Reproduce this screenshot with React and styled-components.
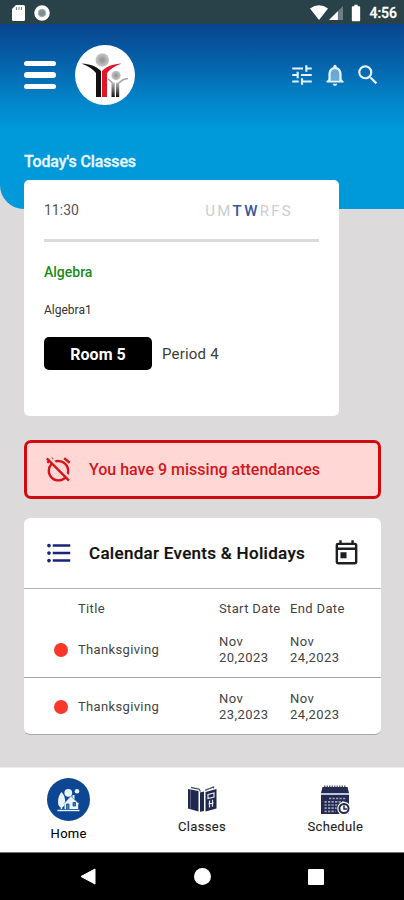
import React from "react";
import styled, { createGlobalStyle } from "styled-components";
import {
  MdBatteryFull,
  MdFormatListBulleted,
  MdOutlineAlarmOff,
  MdOutlineToday,
  MdSearch,
  MdTune
} from "react-icons/md";

const GlobalStyle = createGlobalStyle`
  * {
    box-sizing: border-box;
  }

  body {
    margin: 0;
    font-family: Roboto, "Liberation Sans", sans-serif;
    background: #dcdadb;
  }
`;

const Screen = styled.div`
  width: 404px;
  height: 900px;
  display: flex;
  flex-direction: column;
  overflow: hidden;
  background: #dcdadb;
`;

const StatusBar = styled.div`
  height: 24px;
  flex: none;
  display: flex;
  justify-content: space-between;
  align-items: center;
  padding: 1px 7px 0 12px;
  background: #294148;
  color: #fff;
`;

const StatusGroup = styled.div`
  display: flex;
  align-items: center;
  gap: ${({ gap }) => gap}px;
`;

const Clock = styled.span`
  font-size: 14px;
  font-weight: 500;
  -webkit-text-stroke: 0.3px #fff;
`;

const Hero = styled.header`
  height: 185px;
  flex: none;
  padding: 20px 23px 0 24px;
  border-bottom-left-radius: 24px;
  background: linear-gradient(#08468f 0, #0561a9 38px, #0286ca 78px, #0099d9 106px);
`;

const Toolbar = styled.div`
  height: 62px;
  display: flex;
  align-items: center;
`;

const MenuButton = styled.button`
  width: 32px;
  display: flex;
  flex-direction: column;
  gap: 6px;
  padding: 0;
  border: none;
  background: none;
`;

const MenuLine = styled.span`
  height: 5.4px;
  border-radius: 3px;
  background: #fff;
`;

const Logo = styled.div`
  width: 60px;
  height: 60px;
  margin-left: 19px;
  border-radius: 50%;
  background: #fff;
`;

const Actions = styled.div`
  margin-left: auto;
  display: flex;
  align-items: center;
  gap: 7px;
  color: #e4f2fc;
`;

const HeroTitle = styled.h2`
  margin: 46px 0 0;
  font-size: 16px;
  line-height: 20px;
  font-weight: 500;
  letter-spacing: -0.13px;
  color: #e9f7ff;
  -webkit-text-stroke: 0.3px #e9f7ff;
`;

const Content = styled.main`
  flex: 1;
  min-height: 0;
  padding: 0 23px 0 24px;
`;

const ClassCard = styled.section`
  width: 315px;
  height: 236px;
  margin-top: -29px;
  padding: 20px;
  border-radius: 5px;
  background: #fff;
  position: relative;
`;

const ClassHead = styled.div`
  display: flex;
  justify-content: space-between;
  height: 42px;
  padding-right: 26px;
  border-bottom: 3px solid #dbdbdb;
`;

const Time = styled.span`
  font-size: 14px;
  line-height: 20px;
  color: #555;
`;

const Days = styled.span`
  font-size: 15px;
  line-height: 23px;
  letter-spacing: 2.3px;
  color: #cbcdd1;
`;

const ActiveDay = styled.span`
  font-weight: 500;
  color: #3b559b;
`;

const Subject = styled.div`
  margin-top: 20px;
  font-size: 14px;
  line-height: 20px;
  font-weight: 500;
  color: #1b8a1b;
`;

const Course = styled.div`
  margin-top: 19px;
  font-size: 12px;
  line-height: 18px;
  color: #333;
`;

const RoomRow = styled.div`
  margin-top: 18px;
  display: flex;
  align-items: center;
  gap: 10px;
`;

const Room = styled.span`
  width: 108px;
  height: 33px;
  border-radius: 5px;
  background: #000;
  color: #fff;
  font-size: 16px;
  line-height: 35px;
  font-weight: 700;
  text-align: center;
`;

const Period = styled.span`
  height: 33px;
  font-size: 15px;
  line-height: 35px;
  letter-spacing: 0.2px;
  color: #3c3c3c;
`;

const Alert = styled.div`
  height: 59px;
  margin-top: 24px;
  display: flex;
  align-items: center;
  gap: 16px;
  padding-left: 17px;
  border: 3px solid #d10a10;
  border-radius: 7px;
  background: #ffd8d6;
  color: #d2161c;
  font-size: 16px;
  font-weight: 500;
`;

const Events = styled.section`
  height: 217px;
  margin-top: 19px;
  border-radius: 6px;
  border-bottom: 1px solid #a8a8a8;
  background: #fff;
`;

const EventsHead = styled.div`
  height: 71px;
  display: flex;
  align-items: center;
  padding: 0 20px 0 20px;
  border-bottom: 1px solid #b5b5b5;
  color: #17237c;
`;

const EventsTitle = styled.h3`
  margin: 0 auto 0 15px;
  font-size: 17px;
  font-weight: 500;
  letter-spacing: 0.3px;
  color: #111;
  -webkit-text-stroke: 0.2px #111;
`;

const EventRow = styled.div`
  display: grid;
  grid-template-columns: 54px 141px 71px 70px;
  align-items: center;
  height: ${({ head }) => (head ? 33 : 56)}px;
  padding-top: ${({ head }) => (head ? 7 : 1)}px;
  border-bottom: ${({ line }) => (line ? "1px solid #a6a6a6" : "none")};
  line-height: 16px;
  color: #444;
`;

const Cell = styled.span`
  font-size: 13px;
  letter-spacing: 0.35px;
  white-space: ${({ nowrap }) => (nowrap ? "nowrap" : "normal")};
`;

const DateCell = styled(Cell)`
  width: 56px;
  letter-spacing: 0.45px;
`;

const Dot = styled.span`
  width: 14px;
  height: 14px;
  margin-left: 30px;
  border-radius: 50%;
  background: #f9372b;
`;

const TabBar = styled.nav`
  height: 86px;
  flex: none;
  display: grid;
  grid-template-columns: repeat(3, 1fr);
  padding: 0 2px;
  border-top: 1px solid #eeedee;
  border-bottom: 1px solid #777;
  background: #fff;
`;

const Tab = styled.a`
  display: flex;
  flex-direction: column;
  align-items: center;
  padding-top: ${({ active }) => (active ? 10 : 16)}px;
  font-size: 13px;
  line-height: 16px;
  letter-spacing: 0.3px;
  color: ${({ active }) => (active ? "#000" : "#222")};
  -webkit-text-stroke: 0.1px currentColor;
`;

const TabIcon = styled.span`
  width: ${({ size }) => size}px;
  height: ${({ size }) => size}px;
  margin-bottom: ${({ gap }) => gap}px;
  border-radius: 50%;
  background: ${({ bg }) => bg || "none"};
`;

const SystemBar = styled.div`
  height: 47px;
  flex: none;
  display: flex;
  justify-content: space-between;
  align-items: center;
  padding: 0 80px;
  background: #000;
`;

const Glyph = styled.svg`
  display: block;
  flex: none;
`;

const days = ["U", "M", "T", "W", "R", "F", "S"];
const activeDays = ["T", "W"];

const events = [
  { id: 1, title: "Thanksgiving", start: "Nov 20,2023", end: "Nov 24,2023" },
  { id: 2, title: "Thanksgiving", start: "Nov 23,2023", end: "Nov 24,2023" }
];

function SchoolLogo() {
  return (
    <Glyph width="60" height="60" viewBox="0 0 60 60">
      <defs>
        <radialGradient id="head">
          <stop offset="0" stopColor="#8f8f8f" />
          <stop offset="1" stopColor="#c8c8c8" />
        </radialGradient>
        <linearGradient id="legs" x1="0" y1="0" x2="0" y2="1">
          <stop offset="0" stopColor="#bbb" />
          <stop offset="1" stopColor="#111" />
        </linearGradient>
      </defs>
      <circle cx="27.3" cy="15" r="6.8" fill="url(#head)" />
      <path d="M6.500 18.500c8 .5 14.500 2.500 19.500 7.500v26h-5V28c-3-4-8-7-14.500-9.500z" fill="#111" />
      <path d="M46.500 18.500c-8 .5-14.500 2.500-19.500 7.500v26h5V28c3-4 8-7 14.500-9.500z" fill="#e01728" />
      <circle cx="41" cy="30.500" r="4.700" fill="url(#head)" />
      <path d="M33 34c1.500 1 3 2 4.500 4M53 33.500c-4 .5-7 2-9 4.500" fill="none" stroke="#a5a5a5" strokeWidth="1.500" />
      <path d="M36.500 37.500h3.200v14.500h-3.200zM41 37.500h3.200v14.500H41z" fill="url(#legs)" />
    </Glyph>
  );
}

function BellIcon() {
  return (
    <Glyph width="26" height="26" viewBox="0 0 24 24" fill="currentColor">
      <path d="M6 17v-6c0-3 2-5 6-5s6 2 6 5v6z" opacity=".45" />
      <path d="M12 22c1.100 0 2-.9 2-2h-4c0 1.100.9 2 2 2zm6-6v-5c0-3.070-1.630-5.640-4.500-6.320V4c0-.83-.67-1.500-1.500-1.500s-1.500.67-1.500 1.500v.68C7.640 5.360 6 7.920 6 11v5l-2 2v1h16v-1l-2-2zm-2 1H8v-6c0-2.480 1.510-4.500 4-4.500s4 2.020 4 4.500v6z" />
    </Glyph>
  );
}

function HomeIcon() {
  return (
    <Glyph width="43" height="43" viewBox="0 0 43 43">
      <g fill="#e8f4ff">
        <path d="M10.500 31.800h22v1.400h-22z" />
        <path d="M14.500 14c2.500 2.500 3.700 5.500 3.700 9.500 0 3-1.200 5-3 6v1.500h-1.500v-1.500c-2-1-2.700-3-2.700-5.500 0-4 1.300-7.500 3.500-10z" />
        <path d="M17.500 25 24 17.500l1.500 1.700V17h2v4.300l4.500 4.200-.8 1.200V31H17.500z" />
        <circle cx="21.300" cy="14.800" r="3.900" />
        <circle cx="30" cy="13.300" r="2.300" />
      </g>
      <path d="m17 25.500 7-7.300 7 7" fill="none" stroke="#0d4693" strokeWidth=".5" />
      <path d="M19.500 31v-5h2.500v5M26 24.500h2.500V28H26z" fill="#4e7db9" stroke="#0d4693" strokeWidth=".8" />
    </Glyph>
  );
}

function BooksIcon() {
  return (
    <Glyph width="32" height="32" viewBox="0 0 32 32">
      <path d="m2 5 10.500 2v20.500L2 24.500zM14 8.500l4-1V27l-4 .8zM19.500 8 30.500 5v19.500l-11 3z" fill="#20284f" />
      <path d="m5 3.500 8 1.700 1.500 2.300M19 6.300 27.500 3v1.500" fill="none" stroke="#50566c" strokeWidth="1.300" />
      <path d="M4.500 6v18.500" stroke="#727991" strokeWidth=".7" />
      <path d="m22 10.500 6-1.500v4l-6 1.500zM23.500 16.500v7M26.500 15.700v7M22.500 20l5-1.200" fill="none" stroke="#e9ebf2" strokeWidth="1.200" />
    </Glyph>
  );
}

function ScheduleIcon() {
  return (
    <Glyph width="32" height="32" viewBox="0 0 32 32">
      <path d="M3.500 3h25L30 9H2z" fill="#252b50" />
      <path d="M5 2.200h22" stroke="#666" strokeWidth="1.600" strokeDasharray="1.500 1" />
      <path d="M2 11h28v19H2z" fill="#252b50" />
      <path d="M2 10h28" stroke="#bcc5de" strokeWidth="2" />
      <path d="M10 14.500h17M5.500 17.800h21M5.500 21h13M5.500 24.200h12M5.500 27.300h11" stroke="#98a1bd" strokeWidth="1.700" strokeDasharray="2.300 1.200" />
      <circle cx="25" cy="24.500" r="6.800" fill="#fff" />
      <circle cx="25" cy="24.500" r="4.600" fill="none" stroke="#252b50" strokeWidth="2" />
      <path d="M25 21.500v3.500h3" fill="none" stroke="#252b50" strokeWidth="1.500" />
    </Glyph>
  );
}

function App() {
  return (
    <>
      <GlobalStyle />
      <Screen>
        <StatusBar>
          <StatusGroup gap={9}>
            <Glyph width="13" height="16" viewBox="0 0 13 16">
              <path d="M4 0h7.500Q13 0 13 1.500v13q0 1.500-1.500 1.500h-10Q0 16 0 14.500V4z" fill="#fff" />
              <path d="M4.500 2v3M7 2v3M9.500 2v3" stroke="#7a8b90" />
            </Glyph>
            <Glyph width="16" height="16" viewBox="0 0 16 16">
              <circle cx="8" cy="8" r="6" fill="#a5b0b3" stroke="#fff" strokeWidth="3.500" />
              <circle cx="8" cy="8" r="3" fill="#7f8d91" />
            </Glyph>
          </StatusGroup>
          <StatusGroup gap={3}>
            <StatusGroup gap={1}>
              <Glyph width="18" height="15" viewBox="0 0 18 15">
                <path d="M0 3.500Q9-3 18 3.500L9 15z" fill="#fff" />
              </Glyph>
              <Glyph width="14" height="14" viewBox="0 0 15 15">
                <path d="M15 0v15H0z" fill="#6c7e83" />
                <path d="M9.500 5.500V15H0z" fill="#fff" />
              </Glyph>
            </StatusGroup>
            <MdBatteryFull size={20} />
            <Clock>4:56</Clock>
          </StatusGroup>
        </StatusBar>

        <Hero>
          <Toolbar>
            <MenuButton aria-label="Menu">
              <MenuLine />
              <MenuLine />
              <MenuLine />
            </MenuButton>
            <Logo>
              <SchoolLogo />
            </Logo>
            <Actions>
              <MdTune size={26} />
              <BellIcon />
              <MdSearch size={26} />
            </Actions>
          </Toolbar>
          <HeroTitle>Today's Classes</HeroTitle>
        </Hero>

        <Content>
          <ClassCard>
            <ClassHead>
              <Time>11:30</Time>
              <Days>
                {days.map(day =>
                  activeDays.includes(day) ? (
                    <ActiveDay key={day}>{day}</ActiveDay>
                  ) : (
                    day
                  )
                )}
              </Days>
            </ClassHead>
            <Subject>Algebra</Subject>
            <Course>Algebra1</Course>
            <RoomRow>
              <Room>Room 5</Room>
              <Period>Period 4</Period>
            </RoomRow>
          </ClassCard>

          <Alert>
            <MdOutlineAlarmOff size={29} />
            You have 9 missing attendances
          </Alert>

          <Events>
            <EventsHead>
              <MdFormatListBulleted size={30} />
              <EventsTitle>Calendar Events &amp; Holidays</EventsTitle>
              <MdOutlineToday size={29} color="#1c2025" />
            </EventsHead>
            <EventRow head>
              <span />
              <Cell>Title</Cell>
              <Cell nowrap>Start Date</Cell>
              <Cell nowrap>End Date</Cell>
            </EventRow>
            {events.map((event, i) => (
              <EventRow key={event.id} line={i < events.length - 1}>
                <Dot />
                <Cell>{event.title}</Cell>
                <DateCell>{event.start}</DateCell>
                <DateCell>{event.end}</DateCell>
              </EventRow>
            ))}
          </Events>
        </Content>

        <TabBar>
          <Tab active>
            <TabIcon size={43} gap={5} bg="#0d4693">
              <HomeIcon />
            </TabIcon>
            Home
          </Tab>
          <Tab>
            <TabIcon size={32} gap={3}>
              <BooksIcon />
            </TabIcon>
            Classes
          </Tab>
          <Tab>
            <TabIcon size={32} gap={3}>
              <ScheduleIcon />
            </TabIcon>
            Schedule
          </Tab>
        </TabBar>

        <SystemBar>
          <Glyph width="16" height="17" viewBox="0 0 16 17">
            <path d="M15 1v15L1 8.500z" fill="#fff" stroke="#fff" strokeLinejoin="round" />
          </Glyph>
          <Glyph width="17" height="17" viewBox="0 0 17 17">
            <circle cx="8.500" cy="8.500" r="8.500" fill="#fff" />
          </Glyph>
          <Glyph width="16" height="16" viewBox="0 0 16 16">
            <rect width="16" height="16" rx="1" fill="#fff" />
          </Glyph>
        </SystemBar>
      </Screen>
    </>
  );
}

export default App;
